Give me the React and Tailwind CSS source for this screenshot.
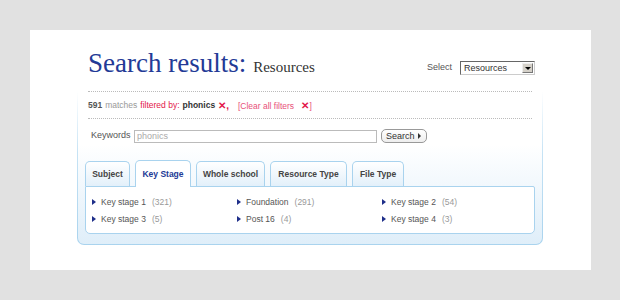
export default function App() {
  const items = [
    { label: 'Key stage 1', count: 321 },
    { label: 'Foundation', count: 291 },
    { label: 'Key stage 2', count: 54 },
    { label: 'Key stage 3', count: 5 },
    { label: 'Post 16', count: 4 },
    { label: 'Key stage 4', count: 3 },
  ];
  const tabs = [
    { label: 'Subject', w: 'w-[45px]' },
    { label: 'Key Stage', w: 'w-[56px]', active: true },
    { label: 'Whole school', w: 'w-[69px]' },
    { label: 'Resource Type', w: 'w-[77px]' },
    { label: 'File Type', w: 'w-[52px]' },
  ];

  return (
    <div className="w-[620px] h-[300px] bg-[#e1e1e1] pt-[30px] pl-[30px] font-['Liberation_Sans',Arial,sans-serif]">
      <div className="w-[561px] h-[240px] bg-white flex flex-col">
        {/* heading */}
        <div className="flex items-end justify-between pl-[58px] pr-[56px] pt-[17px] h-[47px]">
          <div className="flex items-baseline gap-[7px] font-['Liberation_Serif','Times_New_Roman',serif] leading-none">
            <span className="text-[27px] text-[#233a96]">Search results:</span>
            <span className="text-[15px] text-[#333]">Resources</span>
          </div>
          <div className="flex items-center gap-[8px] mb-[2px]">
            <span className="text-[9px] text-[#555]">Select</span>
            <div className="w-[75px] h-[14px] border border-[#666] border-r-[#ccc] border-b-[#ccc] flex items-center justify-between pl-[3px] pr-[1px] bg-white">
              <span className="text-[9px] text-[#333] leading-none">Resources</span>
              <div className="w-[11px] h-[10px] bg-[#d4d0c8] border border-[#eee] border-r-[#777] border-b-[#777] flex items-center justify-center">
                <div className="w-0 h-0 border-l-[3px] border-r-[3px] border-t-[3px] border-l-transparent border-r-transparent border-t-black" />
              </div>
            </div>
          </div>
        </div>

        {/* panel */}
        <div className="ml-[47px] mt-[14px] w-[466px] h-[154px] rounded-b-[7px] p-px pt-0 bg-gradient-to-b from-white via-[#c6e3f5] via-40% to-[#a9d3ee]">
          <div className="w-full h-full rounded-b-[6px] bg-gradient-to-b from-white via-white via-35% to-[#dfeef9] px-[7px] flex flex-col">
            <div className="mx-[3px] border-t border-dotted border-[#bbb]" />
            <div className="mx-[3px] h-[26px] flex items-center text-[8.5px] gap-[3px]">
              <span className="font-bold text-[#555]">591</span>
              <span className="text-[#999]">matches</span>
              <span className="text-[#e3174b]">filtered by:</span>
              <span className="text-[#333] font-bold">phonics</span>
              <span className="text-[#e3174b] font-bold text-[10px]">✕,</span>
              <span className="text-[#e8507a] ml-[6px]">
                [Clear all filters <span className="font-bold text-[#e3174b] text-[10px] ml-[5px]">✕</span>]
              </span>
            </div>
            <div className="mx-[3px] border-t border-dotted border-[#bbb]" />

            {/* keywords */}
            <div className="flex items-center mt-[10px] ml-[6px]">
              <span className="text-[9px] text-[#555] w-[43px]">Keywords</span>
              <div className="w-[243px] h-[13px] border border-[#bbb] flex items-center pl-[2px]">
                <span className="text-[9px] text-[#aaa] leading-none">phonics</span>
              </div>
              <div className="ml-[4px] w-[46px] h-[14px] rounded-[5px] border border-[#999] bg-gradient-to-b from-white to-[#eee] flex items-center justify-between pl-[4px] pr-[5px]">
                <span className="text-[9px] text-[#333] leading-none">Search</span>
                <div className="w-0 h-0 border-t-[3px] border-b-[3px] border-l-[3px] border-t-transparent border-b-transparent border-l-[#333]" />
              </div>
            </div>

            {/* tabs */}
            <div className="flex items-end gap-[5px] mt-[16px] h-[27px] relative z-10">
              {tabs.map((t) =>
                t.active ? (
                  <div key={t.label} className={`${t.w} h-[27px] -mb-px rounded-t-[5px] border border-b-0 border-[#a9d3ee] bg-white flex items-center justify-center text-[8.5px] font-bold text-[#233a96]`}>
                    {t.label}
                  </div>
                ) : (
                  <div key={t.label} className={`${t.w} h-[25px] rounded-t-[5px] border border-b-0 border-[#a9d3ee] bg-gradient-to-b from-white to-[#e3f0fa] flex items-center justify-center text-[8.5px] font-bold text-[#444]`}>
                    {t.label}
                  </div>
                )
              )}
            </div>

            {/* content */}
            <div className="h-[48px] bg-white border border-[#a9d3ee] rounded-b-[5px] rounded-tr-[2px] grid grid-cols-[145px_145px_1fr] content-center gap-y-[6px] pl-[6px] pt-[1px]">
              {items.map((it) => (
                <div key={it.label} className="flex items-center text-[8.5px] leading-[11px]">
                  <div className="w-0 h-0 border-t-[3px] border-b-[3px] border-l-[4px] border-t-transparent border-b-transparent border-l-[#1f2f8a] mr-[5px]" />
                  <span className="text-[#555]">{it.label}</span>
                  <span className="text-[#999] ml-[6px]">({it.count})</span>
                </div>
              ))}
            </div>
          </div>
        </div>
      </div>
    </div>
  );
}
